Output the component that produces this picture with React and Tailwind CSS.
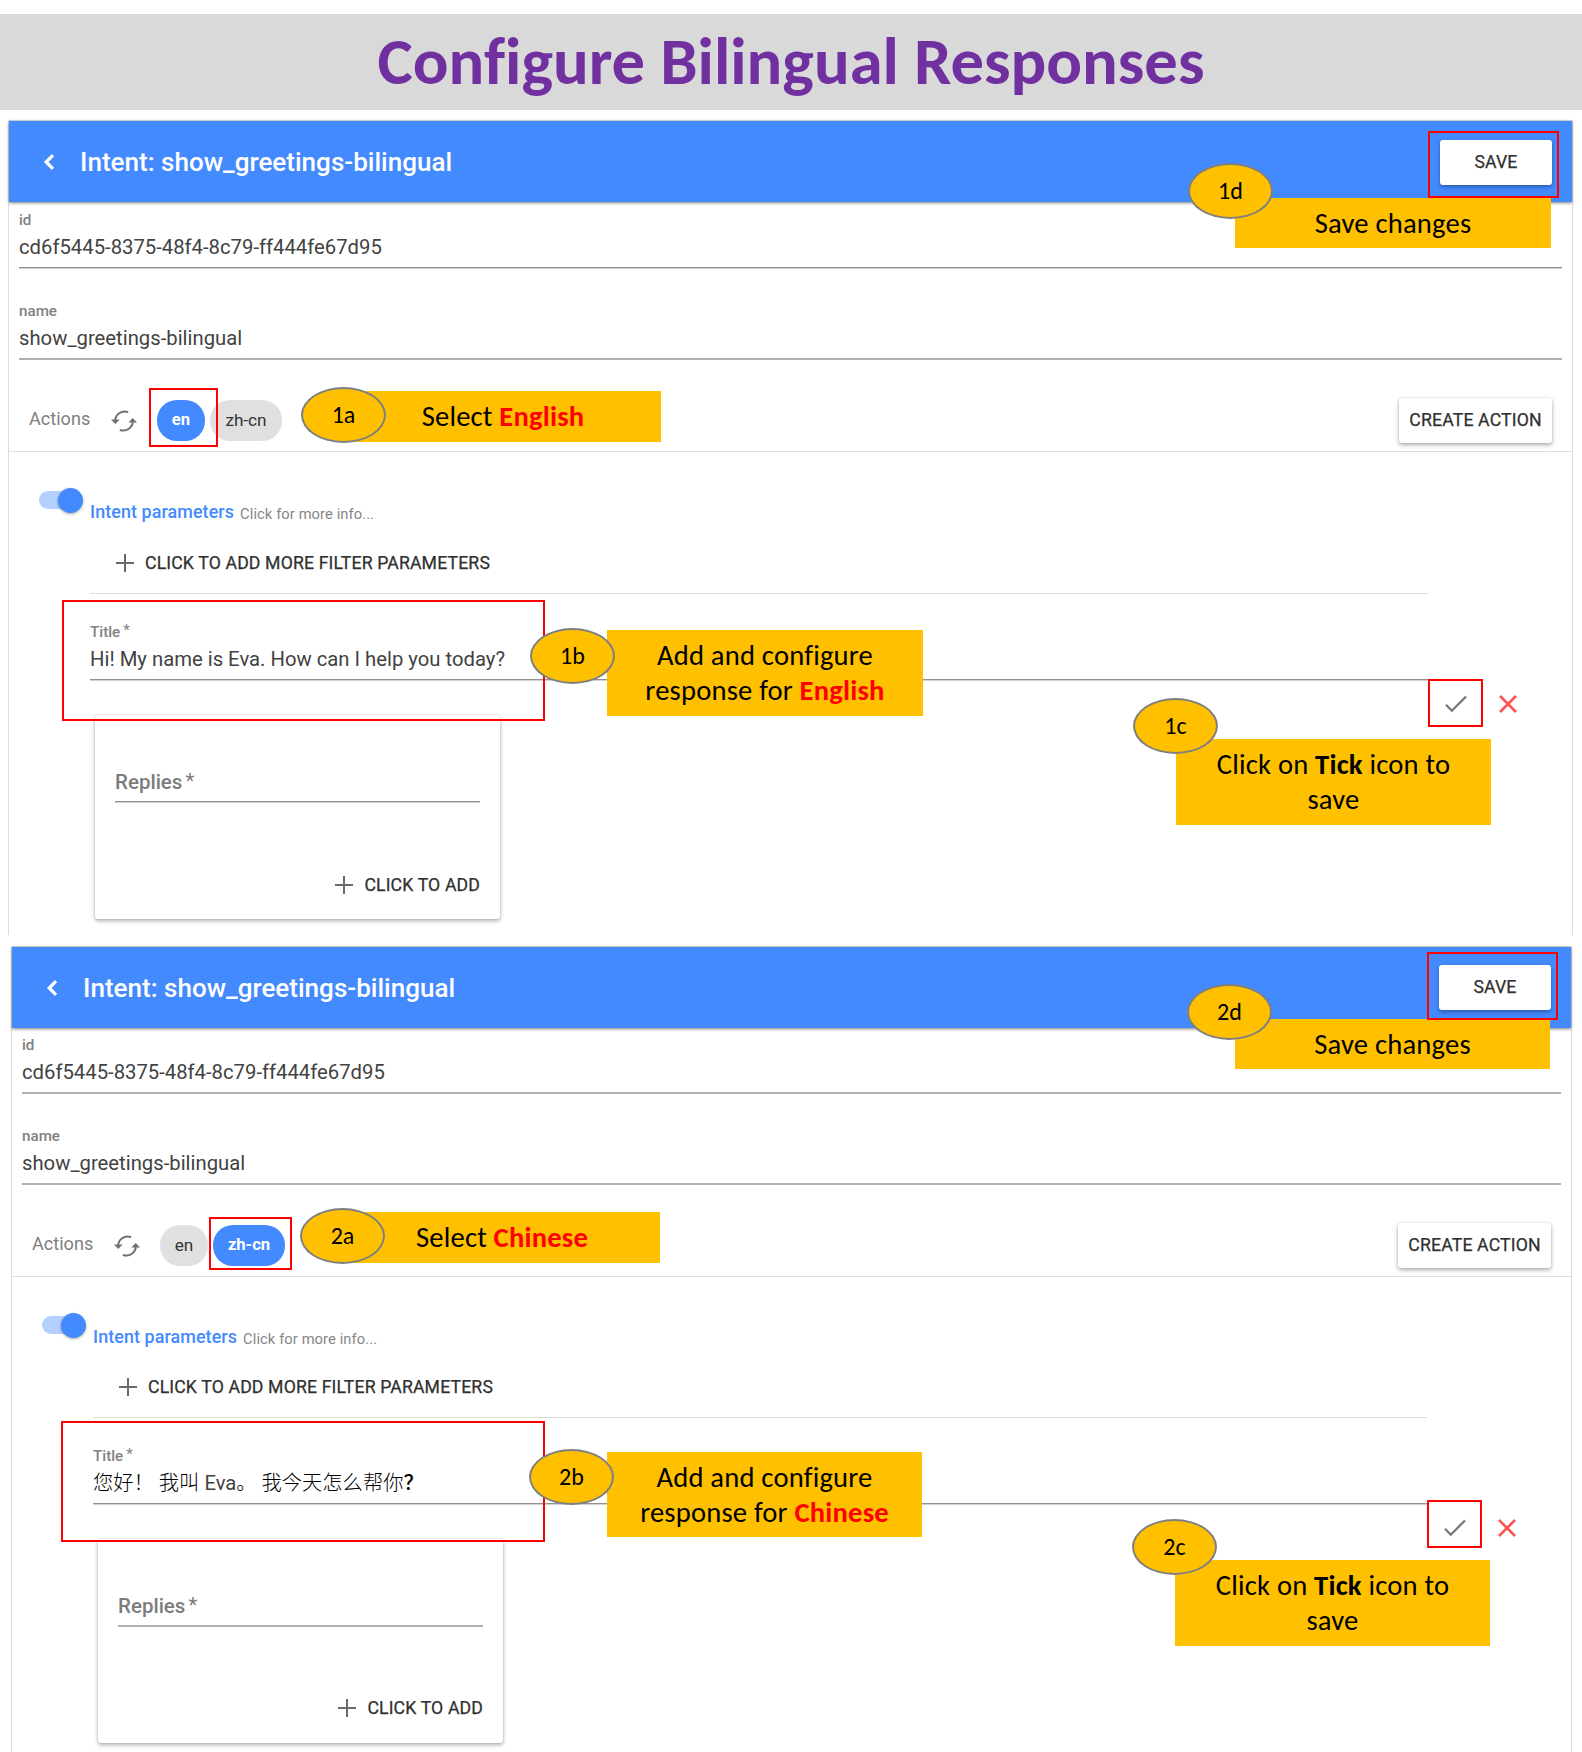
const calibri = "font-['Carlito','Calibri','Lato',sans-serif] [font-variant-ligatures:none]";

function Chevron() {
  return (
    <svg width="12" height="16" viewBox="0 0 12 16" fill="none" stroke="#fff" strokeWidth="3.2">
      <path d="M10 1.2 3.2 8 10 14.8" />
    </svg>
  );
}

function Refresh() {
  return (
    <svg width="26" height="22" viewBox="0 0 26 22" fill="none" stroke="#707070" strokeWidth="2">
      <path d="M17.2 2.2A9.4 9.4 0 0 0 4.2 11.5" />
      <path d="M8.8 19.8A9.4 9.4 0 0 0 21.8 10.5" />
      <path d="M0 9.4h8.6L4.3 14z" fill="#707070" stroke="none" />
      <path d="M17.4 12.6H26L21.7 8z" fill="#707070" stroke="none" />
    </svg>
  );
}

function Plus() {
  return (
    <svg width="18" height="18" viewBox="0 0 18 18" stroke="#6a6a6a" strokeWidth="2" className="shrink-0">
      <path d="M9 0v18M0 9h18" />
    </svg>
  );
}

function Rule({ solid }) {
  return solid ? (
    <div className="h-0.5 bg-[#b0b0b0]" />
  ) : (
    <div className="h-0.5 border-b border-[#d2d2d2] bg-[#909090]" />
  );
}

function Field({ label, required, solid, children }) {
  return (
    <div>
      <div className="flex h-[18px] text-[15.2px] leading-[18px] font-medium text-[#818181]">
        {label}
        {required && <span className="-mt-0.5 ml-[3px] font-normal">*</span>}
      </div>
      <div className="mt-1.5 h-6 text-[20.27px] leading-6 whitespace-nowrap text-[#424242]">{children}</div>
      <div className="mt-2">
        <Rule solid={solid} />
      </div>
    </div>
  );
}

function Pill({ active, wide, children }) {
  return (
    <span
      className={`flex h-[41px] items-center justify-center rounded-[20px] ${wide ? "w-[72px]" : "w-12"} ${
        active ? "bg-[#448aff] text-[16.6px] font-bold text-white" : "bg-[#e0e0e0] text-[17.2px] text-[#333]"
      }`}
    >
      {children}
    </span>
  );
}

const raised = "shadow-[0_2px_4px_rgba(0,0,0,0.32),0_0_2px_rgba(0,0,0,0.12)]";
const caps = "text-[17.66px] tracking-[0.14px] [-webkit-text-stroke:0.25px_#303030] text-[#303030]";

function IntentPanel({ frame, header, saveInset, fieldsTop, idSolid, repliesSolid, lang, formTop, cardFoot, title }) {
  return (
    <section className={`flex flex-col border-x border-t border-[#dcdcdc] font-['Roboto',sans-serif] ${frame}`}>
      <header
        className={`flex shrink-0 items-center bg-[#448aff] pr-5 pl-[34px] shadow-[0_1px_3px_rgba(0,0,0,0.5)] ${header}`}
      >
        <Chevron />
        <h2 className="ml-[25px] text-[26.05px] leading-8 font-medium text-white">Intent: show_greetings-bilingual</h2>
        <button
          className={`ml-auto h-[45px] w-28 rounded-[3px] bg-white shadow-[0_2px_4px_rgba(0,0,0,0.35)] ${caps} ${saveInset}`}
        >
          SAVE
        </button>
      </header>

      <div className={`flex flex-col gap-[33px] px-2.5 ${fieldsTop}`}>
        <Field label="id" solid={idSolid}>cd6f5445-8375-48f4-8c79-ff444fe67d95</Field>
        <Field label="name" solid>show_greetings-bilingual</Field>
      </div>

      <div className="mt-[30px] flex h-[62px] shrink-0 items-center border-b border-[#dedede] pr-5 pl-5">
        <span className="-mt-[3px] w-[82px] text-[18.1px] text-[#808080]">Actions</span>
        <Refresh />
        <div className="ml-5 flex gap-[5px]">
          <Pill active={lang === "en"}>en</Pill>
          <Pill wide active={lang === "zh"}>zh-cn</Pill>
        </div>
        <button className={`ml-auto h-[45px] w-[153px] rounded-[3px] bg-white ${caps} ${raised}`}>CREATE ACTION</button>
      </div>

      <div className="mt-[35px] flex h-[38px] pl-[30px]">
        <div className="flex h-[26px] w-[45px] items-center">
          <span className="h-[18px] w-[37px] rounded-full bg-[#b4d0ff]" />
          <span className="-ml-[18px] size-[25px] shrink-0 rounded-full bg-[#448aff] shadow-[0_1px_3px_rgba(0,0,0,0.35)]" />
        </div>
        <div className="flex items-baseline pt-[13px] pl-1.5 leading-6">
          <span className="text-[17.9px] font-medium tracking-[0.09px] text-[#448aff]">Intent parameters</span>
          <span className="relative top-px ml-1.5 text-[14.7px] tracking-[0.1px] text-[#868686]">
            Click for more info...
          </span>
        </div>
      </div>

      <div className={`flex ${formTop}`}>
        <div className="flex-1 pl-[81px]">
          <div className={`flex h-6 items-center gap-[11px] pl-[26px] leading-6 ${caps}`}>
            <Plus />
            CLICK TO ADD MORE FILTER PARAMETERS
          </div>
          <div className="mt-[18px] mb-[29px] h-px bg-[#dcdcdc]" />
          <Field label="Title" required>{title}</Field>
          <div className={`mt-[34px] ml-[5px] flex h-[204px] w-[405px] flex-col rounded-[3px] bg-white px-5 ${raised}`}>
            <div className="mt-[55px] flex h-6 text-[20.5px] leading-6 font-medium text-[#7c7c7c]">
              Replies<span className="-mt-px ml-[3px] font-normal">*</span>
            </div>
            <div className="mt-[7px]">
              <Rule solid={repliesSolid} />
            </div>
            <div className={`mt-auto flex h-6 items-center justify-end gap-[11px] leading-6 ${caps} ${cardFoot}`}>
              <Plus />
              CLICK TO ADD
            </div>
          </div>
        </div>
        <div className="flex w-[144px] items-start gap-[32px] pt-[144px] pl-[17px]">
          <svg width="22" height="18" viewBox="0 0 22 18" fill="none" stroke="#757575" strokeWidth="2.2">
            <path d="M1 9.8 6.8 15.8 21 1.4" />
          </svg>
          <svg width="18" height="18" viewBox="0 0 18 18" fill="none" stroke="#ff5252" strokeWidth="2.6">
            <path d="M1 1 17 17M17 1 1 17" />
          </svg>
        </div>
      </div>
    </section>
  );
}

function Mark({ place }) {
  return <div className={`absolute border-2 border-[#ff0000] ${place}`} />;
}

function Note({ place, children }) {
  return (
    <div
      className={`absolute flex items-center justify-center bg-[#ffc000] text-center text-[28.6px] leading-[35px] tracking-[0.2px] text-black ${calibri} ${place}`}
    >
      <p>{children}</p>
    </div>
  );
}

function Step({ place, children }) {
  return (
    <div
      className={`absolute flex h-14 w-[85px] items-center justify-center rounded-[50%] border-2 border-[#7f7f7f] bg-[#ffc000] text-2xl text-black ${calibri} ${place}`}
    >
      {children}
    </div>
  );
}

function Hot({ children }) {
  return <b className="text-[#ff0000]">{children}</b>;
}

export default function App() {
  return (
    <main className="relative h-[1752px] w-[1582px] overflow-hidden bg-white">
      <h1
        className={`mt-3.5 flex h-24 items-center justify-center bg-[#d9d9d9] text-[66.6px] leading-none font-bold whitespace-nowrap text-[#7030a0] ${calibri}`}
      >
        Configure Bilingual Responses
      </h1>

      <IntentPanel
        frame="mt-2.5 ml-2 h-[815px] w-[1565px]"
        header="h-[81px]"
        saveInset="mt-px"
        fieldsTop="pt-[9px]"
        lang="en"
        formTop="mt-[26px]"
        cardFoot="mb-[22px]"
        title="Hi! My name is Eva. How can I help you today?"
      />
      <IntentPanel
        frame="mt-[11px] ml-[11px] h-[816px] w-[1561px]"
        header="h-[81px]"
        saveInset="mt-0"
        fieldsTop="pt-2"
        idSolid
        repliesSolid
        lang="zh"
        formTop="mt-[25px]"
        cardFoot="mb-[23px]"
        title={
          <span className="font-['Roboto','Noto_Sans_CJK_SC',sans-serif]">
            <span className="font-light text-black">您好！</span> <span className="font-light text-black">我叫</span> Eva
            <span className="font-light text-black">。 我今天怎么帮你</span>
            <span className="font-medium text-black">？</span>
          </span>
        }
      />

      <Mark place="left-[1428px] top-[131px] h-[67px] w-[131px]" />
      <Note place="left-[1235px] top-[198px] h-[50px] w-[316px]">Save changes</Note>
      <Step place="left-[1188px] top-[163px]">1d</Step>

      <Mark place="left-[149px] top-[388px] h-[59px] w-[69px]" />
      <Note place="left-[345px] top-[391px] h-[51px] w-[316px]">Select <Hot>English</Hot></Note>
      <Step place="left-[301px] top-[387px]">1a</Step>

      <Mark place="left-[62px] top-[600px] h-[121px] w-[483px]" />
      <Note place="left-[607px] top-[630px] h-[86px] w-[316px]">
        Add and configure<br />response for <Hot>English</Hot>
      </Note>
      <Step place="left-[530px] top-[628px]">1b</Step>

      <Mark place="left-[1428px] top-[679px] h-12 w-[55px]" />
      <Note place="left-[1176px] top-[739px] h-[86px] w-[315px]">
        Click on <b>Tick</b> icon to<br />save
      </Note>
      <Step place="left-[1133px] top-[698px]">1c</Step>

      <Note place="left-[1235px] top-[1019px] h-[50px] w-[315px]">Save changes</Note>
      <Mark place="left-[1427px] top-[952px] h-[68px] w-[131px]" />
      <Step place="left-[1187px] top-[984px]">2d</Step>

      <Mark place="left-[209px] top-[1217px] h-[53px] w-[83px]" />
      <Note place="left-[344px] top-[1212px] h-[51px] w-[316px]">Select <Hot>Chinese</Hot></Note>
      <Step place="left-[300px] top-[1208px]">2a</Step>

      <Mark place="left-[61px] top-[1421px] h-[121px] w-[484px]" />
      <Note place="left-[607px] top-[1452px] h-[85px] w-[315px]">
        Add and configure<br />response for <Hot>Chinese</Hot>
      </Note>
      <Step place="left-[529px] top-[1449px]">2b</Step>

      <Mark place="left-[1427px] top-[1500px] h-12 w-[55px]" />
      <Note place="left-[1175px] top-[1560px] h-[86px] w-[315px]">
        Click on <b>Tick</b> icon to<br />save
      </Note>
      <Step place="left-[1132px] top-[1519px]">2c</Step>
    </main>
  );
}
